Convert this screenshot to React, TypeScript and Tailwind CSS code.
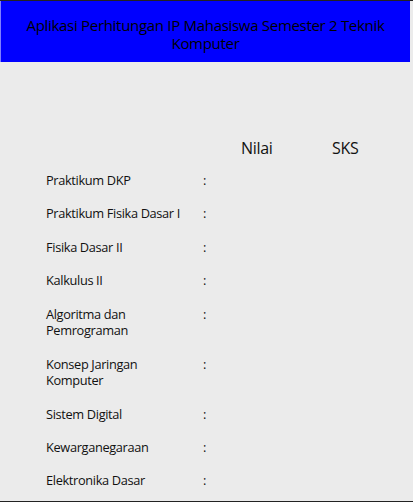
import React from "react";

const rows: string[] = [
  "Praktikum DKP",
  "Praktikum Fisika Dasar I",
  "Fisika Dasar II",
  "Kalkulus II",
  "Algoritma dan Pemrograman",
  "Konsep Jaringan Komputer",
  "Sistem Digital",
  "Kewarganegaraan",
  "Elektronika Dasar",
];

export default function App() {
  return (
    <div
      className="w-[413px] h-[502px] bg-[#ebebeb] border-t border-b border-[#222222] flex flex-col overflow-hidden"
      style={{ fontFamily: '"Open Sans", "Liberation Sans", sans-serif' }}
    >
      <div className="w-[410px] h-[61px] bg-[#0000ff] border-l border-[#8080ff] flex items-center justify-center px-5 pt-[5px]">
        <p className="text-center text-[15px] leading-[18px] text-black tracking-[-0.3px]">
          Aplikasi Perhitungan IP Mahasiswa Semester 2 Teknik Komputer
        </p>
      </div>
      <div className="flex pt-[76px] text-[#111]">
        <div className="w-[241px]" />
        <div className="w-[91px] text-[16px] leading-[20px] tracking-[-0.3px]">Nilai</div>
        <div className="text-[16px] leading-[20px] tracking-[-0.3px]">SKS</div>
      </div>
      <div className="flex flex-col gap-[16.8px] pt-[14px] pl-[46px] text-[12.8px] leading-[16.6px] text-[#111] tracking-[-0.35px]">
        {rows.map((r) => (
          <div key={r} className="flex">
            <div className="w-[157px]">
              <span className="block w-[140px]">{r}</span>
            </div>
            <div>:</div>
          </div>
        ))}
      </div>
    </div>
  );
}
